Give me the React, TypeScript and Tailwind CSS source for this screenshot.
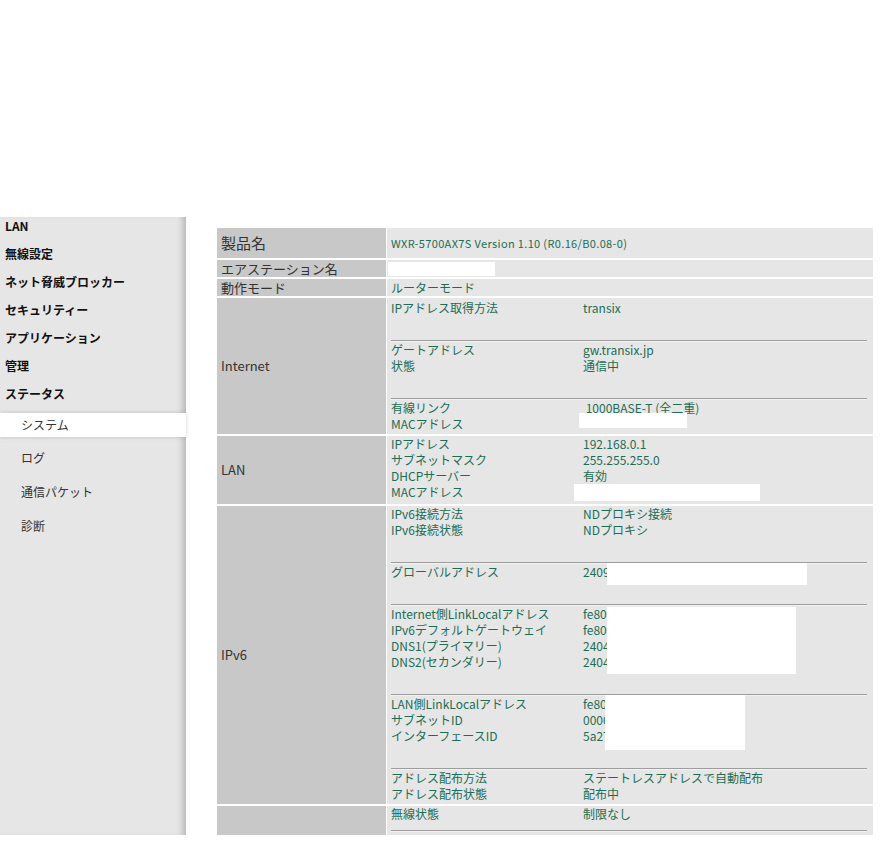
import React from 'react'

type Pair = [string, string]

const menu = ['LAN', '無線設定', 'ネット脅威ブロッカー', 'セキュリティー', 'アプリケーション', '管理', 'ステータス']
const subMenu = ['ログ', '通信パケット', '診断']

const Block = ({ items, box, end = false }: { items: Pair[]; box?: string; end?: boolean }) => (
  <div>
    <div className="relative">
      {items.map(([k, v]) => (
        <div key={k} className="flex h-4 leading-4">
          <span className="w-[192px] shrink-0">{k}</span>
          <span>{v}</span>
        </div>
      ))}
      {box && <div className={box} />}
    </div>
    {!end && (
      <>
        <div className="h-4" />
        <div className="mt-[8px] border-t border-b border-t-[#9c9c9c] border-b-[#f2f2f2]" />
      </>
    )}
  </div>
)

const Row = ({ label, h, children, big = false }: { label: string; h: string; children: React.ReactNode; big?: boolean }) => (
  <div className={`flex gap-px ${h}`}>
    <div className={`w-[169px] shrink-0 bg-[#c8c8c8] px-[4px] flex items-center text-[#333] ${big ? 'text-[15px]' : 'text-[13px]'}`}>
      {label}
    </div>
    <div className="flex-1 bg-[#e6e6e6] pl-[4px] pr-[6px] text-[12px] text-[#1d6d54]">{children}</div>
  </div>
)

const App = () => {
  return (
    <div className="h-[846px] bg-white font-['Noto_Sans_CJK_JP',sans-serif]">
      <div className="h-[217px]" />
      <div className="flex h-[618px] overflow-hidden">
        {/* sidebar */}
        <aside className="w-[186px] shrink-0 bg-[#e6e6e6] shadow-[inset_-7px_0_6px_-4px_rgba(0,0,0,0.22)]">
          {menu.map((m) => (
            <div key={m} className="h-[28px] pl-[5px] text-[12px] font-bold leading-[18px] text-[#111]">
              {m}
            </div>
          ))}
          <div className="flex h-[24px] items-center bg-white pl-[21px] text-[12px] text-[#333] shadow-[0_0_4px_rgba(0,0,0,0.18)]">
            システム
          </div>
          <div className="mt-[4px]">
            {subMenu.map((m) => (
              <div key={m} className="flex h-[34px] items-center pl-[21px] text-[12px] text-[#333]">
                {m}
              </div>
            ))}
          </div>
        </aside>

        {/* main */}
        <main className="pl-[31px] pt-[11px]">
          <div className="flex w-[656px] flex-col gap-[2px]">
            <Row label="製品名" h="h-[30px]" big>
              <div className="flex h-full items-center text-[11px] tracking-[0.35px]">WXR-5700AX7S Version 1.10 (R0.16/B0.08-0)</div>
            </Row>
            <Row label="エアステーション名" h="h-[17px]">
              <div className="mt-[2px] -ml-[3px] h-[14px] w-[107px] bg-white" />
            </Row>
            <Row label="動作モード" h="h-[17px]">
              <div className="leading-[17px]">ルーターモード</div>
            </Row>
            <Row label="Internet" h="h-[136px]">
              <div className="pt-[2px]">
                <Block items={[['IPアドレス取得方法', 'transix']]} />
                <Block items={[['ゲートアドレス', 'gw.transix.jp'], ['状態', '通信中']]} />
                <Block
                  items={[['有線リンク', '\u00a01000BASE-T (全二重)'], ['MACアドレス', '']]}
                  box="absolute left-[188px] top-[13px] h-[15px] w-[108px] bg-white"
                  end
                />
              </div>
            </Row>
            <Row label="LAN" h="h-[68px]">
              <div className="pt-0">
                <Block
                  items={[
                    ['IPアドレス', '192.168.0.1'],
                    ['サブネットマスク', '255.255.255.0'],
                    ['DHCPサーバー', '有効'],
                    ['MACアドレス', ''],
                  ]}
                  box="absolute left-[183px] top-[48px] h-[17px] w-[186px] bg-white"
                  end
                />
              </div>
            </Row>
            <Row label="IPv6" h="h-[298px]">
              <div className="pt-0">
                <Block items={[['IPv6接続方法', 'NDプロキシ接続'], ['IPv6接続状態', 'NDプロキシ']]} />
                <Block
                  items={[['グローバルアドレス', '2409:']]}
                  box="absolute left-[216px] top-[-1px] h-[22px] w-[200px] bg-white"
                />
                <Block
                  items={[
                    ['Internet側LinkLocalアドレス', 'fe80:'],
                    ['IPv6デフォルトゲートウェイ', 'fe80:'],
                    ['DNS1(プライマリー)', '2404'],
                    ['DNS2(セカンダリー)', '2404'],
                  ]}
                  box="absolute left-[216px] top-[1px] h-[67px] w-[189px] bg-white"
                />
                <Block
                  items={[
                    ['LAN側LinkLocalアドレス', 'fe80'],
                    ['サブネットID', '0000'],
                    ['インターフェースID', '5a27'],
                  ]}
                  box="absolute left-[214px] top-[-1px] h-[55px] w-[140px] bg-white"
                />
                <Block items={[['アドレス配布方法', 'ステートレスアドレスで自動配布'], ['アドレス配布状態', '配布中']]} end />
              </div>
            </Row>
            <Row label="" h="h-[60px]">
              <div className="pt-0">
                <div className="flex h-4 leading-4">
                  <span className="w-[192px] shrink-0">無線状態</span>
                  <span>制限なし</span>
                </div>
                <div className="mt-[8px] border-t border-b border-t-[#9c9c9c] border-b-[#f2f2f2]" />
              </div>
            </Row>
          </div>
        </main>
      </div>
    </div>
  )
}

export default App
